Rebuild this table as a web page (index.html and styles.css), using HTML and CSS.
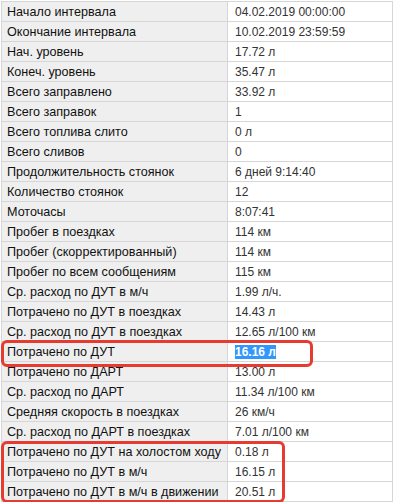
FILE: index.html
```html
<!DOCTYPE html>
<html lang="ru">
<head>
<meta charset="utf-8">
<title>Отчёт</title>
<link rel="stylesheet" href="styles.css">
</head>
<body>
<div class="wrap">
<table class="stats">
<tbody>
<tr><td class="k">Начало интервала</td><td class="v">04.02.2019 00:00:00</td></tr>
<tr><td class="k">Окончание интервала</td><td class="v">10.02.2019 23:59:59</td></tr>
<tr><td class="k">Нач. уровень</td><td class="v">17.72 л</td></tr>
<tr><td class="k">Конеч. уровень</td><td class="v">35.47 л</td></tr>
<tr><td class="k">Всего заправлено</td><td class="v">33.92 л</td></tr>
<tr><td class="k">Всего заправок</td><td class="v">1</td></tr>
<tr><td class="k">Всего топлива слито</td><td class="v">0 л</td></tr>
<tr><td class="k">Всего сливов</td><td class="v">0</td></tr>
<tr><td class="k">Продолжительность стоянок</td><td class="v">6 дней 9:14:40</td></tr>
<tr><td class="k">Количество стоянок</td><td class="v">12</td></tr>
<tr><td class="k">Моточасы</td><td class="v">8:07:41</td></tr>
<tr><td class="k">Пробег в поездках</td><td class="v">114 км</td></tr>
<tr><td class="k">Пробег (скорректированный)</td><td class="v">114 км</td></tr>
<tr><td class="k">Пробег по всем сообщениям</td><td class="v">115 км</td></tr>
<tr><td class="k">Ср. расход по ДУТ в м/ч</td><td class="v">1.99 л/ч.</td></tr>
<tr><td class="k">Потрачено по ДУТ в поездках</td><td class="v">14.43 л</td></tr>
<tr><td class="k">Ср. расход по ДУТ в поездках</td><td class="v">12.65 л/100 км</td></tr>
<tr><td class="k">Потрачено по ДУТ</td><td class="v"><span class="sel">16.16 л</span></td></tr>
<tr><td class="k">Потрачено по ДАРТ</td><td class="v">13.00 л</td></tr>
<tr><td class="k">Ср. расход по ДАРТ</td><td class="v">11.34 л/100 км</td></tr>
<tr><td class="k">Средняя скорость в поездках</td><td class="v">26 км/ч</td></tr>
<tr><td class="k">Ср. расход по ДАРТ в поездках</td><td class="v">7.01 л/100 км</td></tr>
<tr><td class="k">Потрачено по ДУТ на холостом ходу</td><td class="v">0.18 л</td></tr>
<tr><td class="k">Потрачено по ДУТ в м/ч</td><td class="v">16.15 л</td></tr>
<tr><td class="k">Потрачено по ДУТ в м/ч в движении</td><td class="v">20.51 л</td></tr>
</tbody>
</table>
<div class="mark mark-one"></div>
<div class="mark mark-two"></div>
</div>
</body>
</html>
```
FILE: styles.css
```css
html, body {
  margin: 0;
  padding: 0;
  background: #ffffff;
}
body {
  font-family: "Liberation Sans", Arial, sans-serif;
  font-size: 12px;
}
.wrap {
  position: relative;
  padding: 1px 0 0 1px;
}
.stats {
  border-collapse: collapse;
  table-layout: fixed;
  width: 392px;
}
.stats td {
  border: 1px solid #d6d6d6;
  height: 20px;
  padding: 0 5px;
  box-sizing: border-box;
  white-space: nowrap;
  overflow: hidden;
  line-height: 18px;
}
.stats td.k {
  width: 226px;
  background: #efefef;
  color: #111111;
  font-size: 12.6px;
}
.stats td.v {
  background: #ffffff;
  color: #333333;
  padding-left: 7px;
}
.sel {
  background: #3297fd;
  color: #ffffff;
  font-weight: bold;
}
.mark {
  position: absolute;
  border: 3px solid #e53b30;
  border-radius: 6px;
  box-sizing: border-box;
}
.mark-one {
  left: 1px;
  top: 340px;
  width: 312px;
  height: 27px;
}
.mark-two {
  left: 1px;
  top: 441px;
  width: 284px;
  height: 62px;
}
```
